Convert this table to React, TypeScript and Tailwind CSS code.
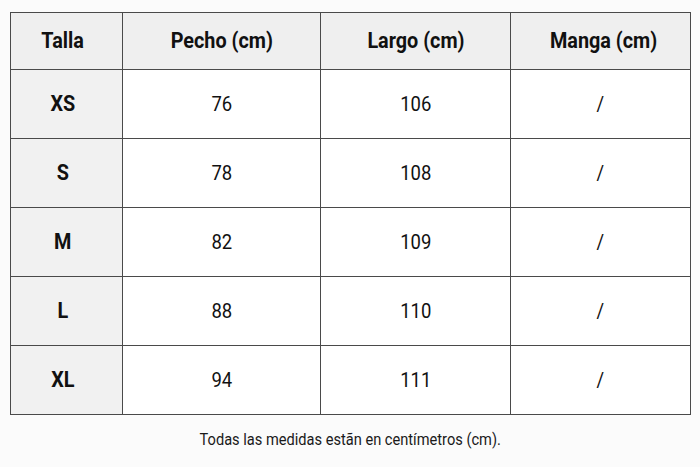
const rows = [
  { size: 'XS', chest: '76', length: '106', sleeve: '/' },
  { size: 'S', chest: '78', length: '108', sleeve: '/' },
  { size: 'M', chest: '82', length: '109', sleeve: '/' },
  { size: 'L', chest: '88', length: '110', sleeve: '/' },
  { size: 'XL', chest: '94', length: '111', sleeve: '/' },
];

export default function App() {
  return (
    <div className="w-[700px] h-[467px] bg-[#fbfbfb] pt-[12px] pl-[10px] font-['Roboto',sans-serif] text-[#111]">
      <table className="table-fixed border-collapse w-[680px]">
        <colgroup>
          <col className="w-[112px]" />
          <col className="w-[198px]" />
          <col className="w-[190px]" />
          <col className="w-[180px]" />
        </colgroup>
        <thead>
          <tr className="h-[57px] bg-[#efefef]">
            {['Talla', 'Pecho (cm)', 'Largo (cm)', 'Manga (cm)'].map((h, i) => (
              <th key={h} className={`border border-[#4a4a4a] text-center align-middle pt-[2px] ${i === 0 ? 'pr-[8px]' : ''} ${i === 3 ? 'pl-[6px]' : ''}`}>
                <span className="inline-block text-[22px] leading-none font-bold scale-x-[0.9]">{h}</span>
              </th>
            ))}
          </tr>
        </thead>
        <tbody>
          {rows.map((r) => (
            <tr key={r.size} className="h-[69px]">
              <td className="border border-[#4a4a4a] bg-[#f1f1f1] text-center pr-[8px] pt-[3px]">
                <span className="inline-block text-[22px] leading-none font-bold scale-x-[0.9]">{r.size}</span>
              </td>
              {[r.chest, r.length, r.sleeve].map((v, i) => (
                <td key={i} className="border border-[#4a4a4a] bg-white text-center pt-[3px]">
                  <span className="inline-block text-[21px] leading-none scale-x-[0.88]">{v}</span>
                </td>
              ))}
            </tr>
          ))}
        </tbody>
      </table>
      <p className="w-[680px] text-center mt-[12px] text-[#1a1a1a]">
        <span className="inline-block text-[17px] scale-x-[0.86]">Todas las medidas estãn en centímetros (cm).</span>
      </p>
    </div>
  );
}
